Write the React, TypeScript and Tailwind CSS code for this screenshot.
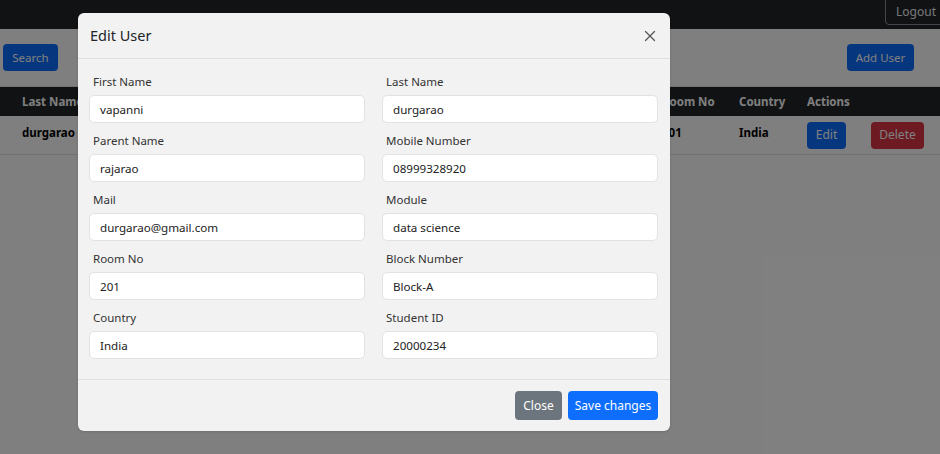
import { X } from "lucide-react";

const fields = [
  ["First Name", "vapanni", "Last Name", "durgarao"],
  ["Parent Name", "rajarao", "Mobile Number", "08999328920"],
  ["Mail", "durgarao@gmail.com", "Module", "data science"],
  ["Room No", "201", "Block Number", "Block-A"],
  ["Country", "India", "Student ID", "20000234"],
];

function Field({ label, value }: { label: string; value: string }) {
  return (
    <div className="mb-[8px]">
      <div className="h-[19px] pl-[4px] text-[11.5px] leading-[19px] text-[#333]">{label}</div>
      <div className="mt-[4px] flex h-[28px] items-center rounded-[5px] border border-[#e2e2e2] bg-white px-[10px] pt-[1px] text-[11.6px] text-[#222]">
        {value}
      </div>
    </div>
  );
}

export default function App() {
  return (
    <div
      className="relative h-[454px] w-[940px] overflow-hidden bg-white"
      style={{ fontFamily: '"Noto Sans", "Open Sans", sans-serif' }}
    >
      {/* page behind the modal */}
      <div className="flex h-[29px] justify-end bg-[#212529]">
        <div className="mr-[-14px] mt-[-4px] flex h-[29px] items-center rounded-[4px] border border-[#8a8f94] pl-[10px] pr-[17px] pt-[2px] text-[12px] text-[#e9ecef]">
          Logout
        </div>
      </div>
      <div className="flex items-center justify-between pl-[3px] pr-[26px] pt-[15px]">
        <button className="h-[27px] w-[55px] rounded-[4px] bg-[#0d6efd] text-[11.5px] text-white">Search</button>
        <button className="h-[27px] w-[67px] rounded-[4px] bg-[#0d6efd] text-[11.5px] text-white">Add User</button>
      </div>
      <div className="mt-[15px] border-t border-[#dee2e6]">
        <div className="grid h-[29px] grid-cols-[640px_77px_68px_1fr] items-center bg-[#212529] pl-[22px] text-[11.5px] font-bold text-white">
          <div>Last Name</div>
          <div>Room No</div>
          <div>Country</div>
          <div>Actions</div>
        </div>
        <div className="grid h-[39px] grid-cols-[640px_77px_68px_1fr] items-center border-b border-[#dee2e6] pl-[22px] text-[11.5px] font-bold text-black">
          <div className="-mt-[4px]">durgarao</div>
          <div className="-mt-[4px]">201</div>
          <div className="-mt-[4px]">India</div>
          <div className="flex gap-[25px]">
            <button className="h-[27px] w-[39px] rounded-[4px] bg-[#0d6efd] text-[12px] font-normal text-white">Edit</button>
            <button className="h-[27px] w-[53px] rounded-[4px] bg-[#dc3545] text-[12px] font-normal text-white">Delete</button>
          </div>
        </div>
      </div>

      {/* backdrop */}
      <div className="absolute inset-0 bg-black/50" />

      {/* modal */}
      <div className="absolute left-[78px] top-[13px] w-[592px] rounded-[6px] bg-[#f2f2f2] shadow-sm">
        <div className="flex h-[46px] items-center justify-between border-b border-[#e0e0e0] pl-[12px] pr-[11px]">
          <div className="text-[14.5px] text-[#212529]">Edit User</div>
          <X className="h-[18px] w-[18px] text-[#555]" strokeWidth={1.6} />
        </div>
        <div className="grid grid-cols-2 gap-x-[17px] pb-[12px] pl-[11px] pr-[12px] pt-[13px]">
          {fields.map(([l1, v1, l2, v2]) => (
            <div key={l1} className="contents">
              <Field label={l1} value={v1} />
              <Field label={l2} value={v2} />
            </div>
          ))}
        </div>
        <div className="flex h-[52px] items-center justify-end gap-[6px] border-t border-[#e0e0e0] pr-[12px]">
          <button className="h-[29px] w-[47px] rounded-[4px] bg-[#6c757d] text-[12px] text-white">Close</button>
          <button className="h-[29px] w-[90px] rounded-[4px] bg-[#0d6efd] text-[12px] text-white">Save changes</button>
        </div>
      </div>
    </div>
  );
}
